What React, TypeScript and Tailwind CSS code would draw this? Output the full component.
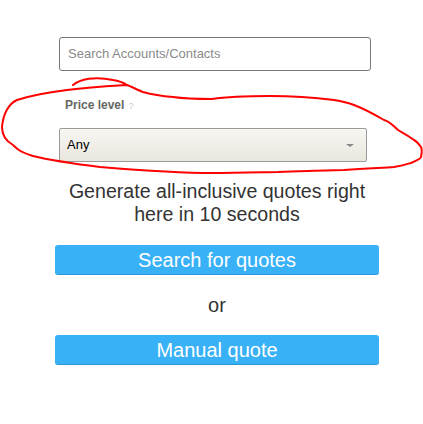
export default function App() {
  return (
    <div className="relative w-[423px] h-[424px] bg-white overflow-hidden font-['Liberation_Sans',Arial,sans-serif]">
      <div className="pt-[37px] pl-[59px] w-[312px] box-content">
        {/* Search */}
        <div className="h-[34px] border border-[#767676] rounded-[3px] flex items-center px-2">
          <span className="text-[13px] text-[#8a8a8a]">Search Accounts/Contacts</span>
        </div>

        {/* Price level */}
        <div className="mt-[25px] pl-[6px] flex items-baseline gap-1 h-[16px]">
          <span className="text-[12px] font-bold text-[#666]">Price level</span>
          <span className="text-[9px] text-[#c8c8c8]">?</span>
        </div>
        <div className="mt-[16px] w-[308px] h-[34px] border border-[#9a9a9a] rounded-[2px] bg-gradient-to-b from-[#f7f6f2] to-[#e9e6dd] flex items-center justify-between pl-[7px] pr-[12px]">
          <span className="text-[13px] text-black">Any</span>
          <span className="w-0 h-0 border-l-[4px] border-r-[4px] border-t-[3px] border-l-transparent border-r-transparent border-t-[#888]" />
        </div>
      </div>

      <div className="mt-[18px] pl-[55px] w-[324px] box-content flex flex-col items-center">
        <p className="text-[19.6px] leading-[23px] text-[#333] text-center w-[324px]">
          Generate all-inclusive quotes right
          <br />
          here in 10 seconds
        </p>
        <button className="mt-[19px] w-[324px] h-[30px] rounded-[3px] bg-[#38b1f7] border-b border-[#2a98d8] text-white text-[20px] leading-[28px]">
          Search for quotes
        </button>
        <p className="mt-[18px] text-[20px] leading-[24px] text-[#333]">or</p>
        <button className="mt-[18px] w-[324px] h-[30px] rounded-[3px] bg-[#38b1f7] border-b border-[#2a98d8] text-white text-[20px] leading-[28px]">
          Manual quote
        </button>
      </div>

      {/* hand-drawn annotation */}
      <svg className="absolute left-0 top-0 pointer-events-none" width="423" height="424" viewBox="0 0 423 424" fill="none">
        <path
          d="M73 85 C80 79 95 76 113 80 C120 81 124 83 127 85 C110 86 90 87 67 90 C50 92 33 95 17 100 C8 104 3 115 2 127 C2 135 6 141 13 145 C17 149 20 152 33 156 C45 159 60 162 100 167 C150 171 190 173 212 173 C240 173 270 172 278 172 C310 171 330 170 344 170 C370 168 385 168 394 167 C405 165 410 163 411 163 C418 160 421 158 421 157 C422 152 422 149 421 147 C418 143 416 141 414 140 C406 134 401 132 398 130 C392 124 388 121 384 120 C372 113 362 108 354 105 C346 102 340 101 334 100 C310 97 290 96 270 96 C240 96 225 97 212 99 C195 99 180 98 173 97 C160 96 150 94 143 92 C138 90 132 87 127 85"
          stroke="#ff0000"
          strokeWidth="2"
          strokeLinecap="round"
          strokeLinejoin="round"
        />
      </svg>
    </div>
  );
}
